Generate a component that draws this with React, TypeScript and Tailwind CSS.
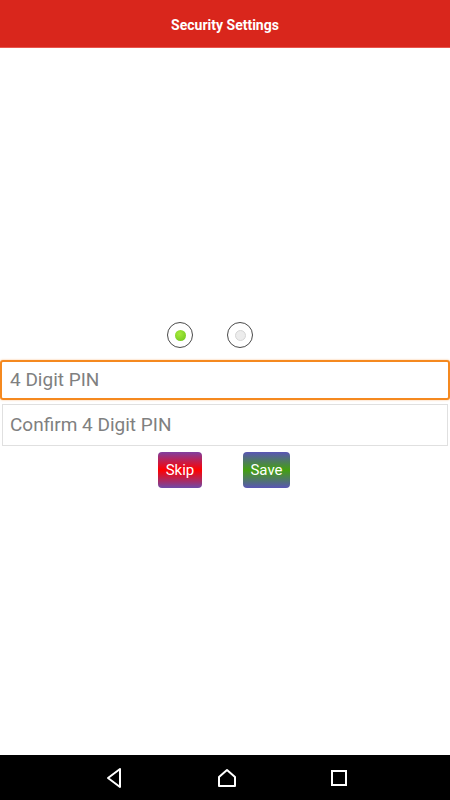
import React from 'react';

function Radio({ checked }: { checked: boolean }) {
  return (
    <div className="w-[26px] h-[26px] rounded-full border-[1.5px] border-[#4a4a4a] flex items-center justify-center bg-white">
      {checked ? (
        <div className="w-[11px] h-[11px] rounded-full bg-[radial-gradient(circle_at_40%_35%,#a6ea3c,#6cc41a)]" />
      ) : (
        <div className="w-[11px] h-[11px] rounded-full bg-[#ececec] border border-[#d6d6d6]" />
      )}
    </div>
  );
}

export default function App() {
  return (
    <div className="w-[450px] h-[800px] flex flex-col bg-white font-['Roboto',sans-serif]">
      <header className="h-[48px] bg-[#d9261c] border-b border-[#e8564e] flex items-center justify-center pt-[3px]">
        <h1 className="text-white text-[14px] font-bold">Security Settings</h1>
      </header>

      <div className="h-[274px]" />

      <div className="flex justify-center pr-[30px] gap-[34px]">
        <Radio checked />
        <Radio checked={false} />
      </div>

      <div className="mt-[12px] h-[40px] mx-0 border-2 border-[#f5891f] rounded-[3px] flex items-center px-[8px] shadow-[0_0_2px_rgba(245,137,31,0.6)]">
        <span className="text-[19px] text-[#808080]">4 Digit PIN</span>
      </div>

      <div className="mt-[4px] h-[42px] mx-[2px] border border-[#e0e0e0] flex items-center px-[7px]">
        <span className="text-[19px] text-[#808080]">Confirm 4 Digit PIN</span>
      </div>

      <div className="mt-[6px] flex pl-[158px] gap-[41px]">
        <button className="w-[44px] h-[36px] rounded-[4px] text-white text-[15px] bg-[linear-gradient(to_bottom,#7f3fa0_0%,#ff0000_50%,#6f4aa8_100%)]">
          Skip
        </button>
        <button className="w-[47px] h-[36px] rounded-[4px] text-white text-[15px] bg-[linear-gradient(to_bottom,#5a55b5_0%,#43a00f_50%,#5a55b5_100%)]">
          Save
        </button>
      </div>

      <div className="flex-1" />

      <nav className="h-[45px] bg-black flex items-center justify-around px-[56px]">
        <svg width="20" height="22" viewBox="0 0 20 22" className="ml-[2px]">
          <path d="M16 2 L4 11 L16 20 Z" fill="none" stroke="white" strokeWidth="2" strokeLinejoin="round" />
        </svg>
        <svg width="20" height="20" viewBox="0 0 20 20">
          <path d="M2 18 L2 9 L10 2 L18 9 L18 18 Z" fill="none" stroke="white" strokeWidth="2" strokeLinejoin="round" />
        </svg>
        <svg width="18" height="18" viewBox="0 0 18 18">
          <rect x="2" y="2" width="14" height="14" fill="none" stroke="white" strokeWidth="2" />
        </svg>
      </nav>
    </div>
  );
}
